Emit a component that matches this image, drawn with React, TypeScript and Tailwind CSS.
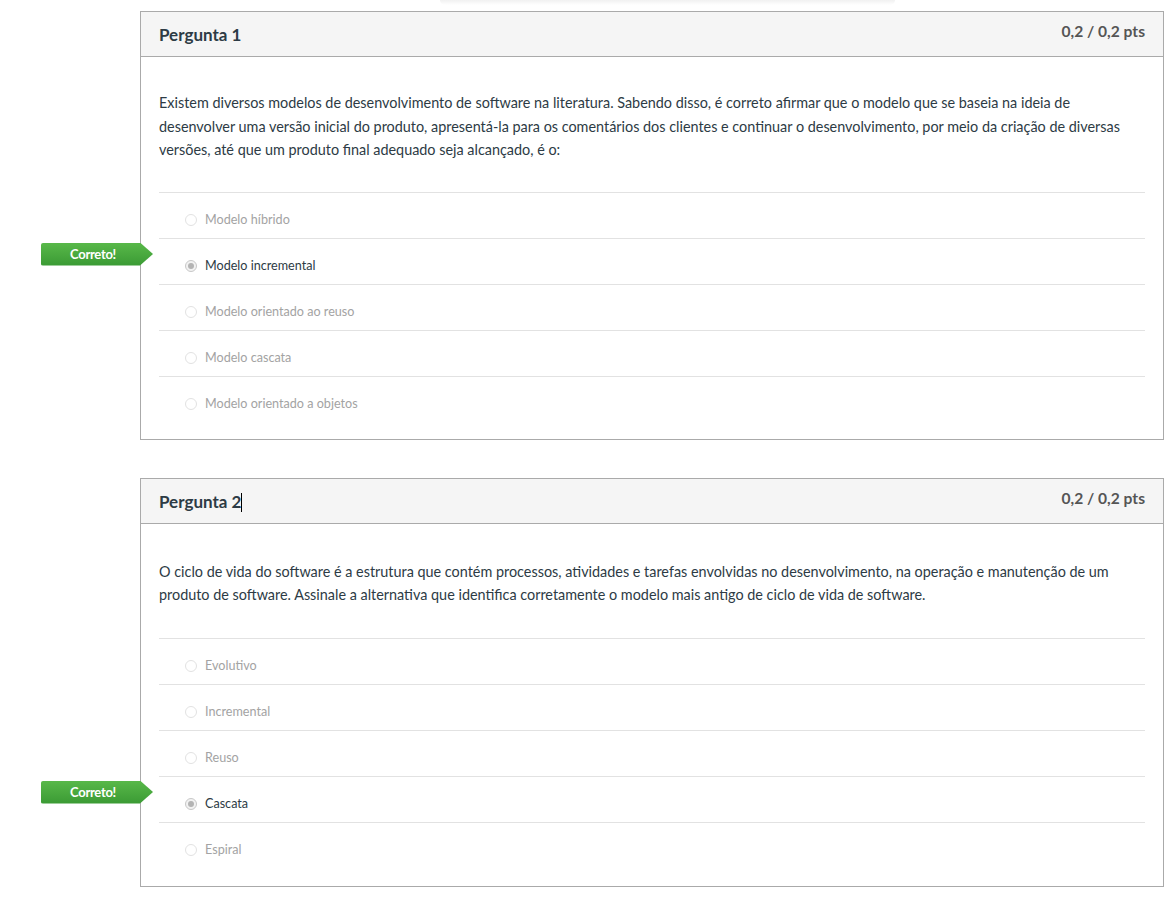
const questions = [
  {
    title: "Pergunta 1",
    text: "Existem diversos modelos de desenvolvimento de software na literatura. Sabendo disso, é correto afirmar que o modelo que se baseia na ideia de desenvolver uma versão inicial do produto, apresentá-la para os comentários dos clientes e continuar o desenvolvimento, por meio da criação de diversas versões, até que um produto final adequado seja alcançado, é o:",
    answers: [
      "Modelo híbrido",
      "Modelo incremental",
      "Modelo orientado ao reuso",
      "Modelo cascata",
      "Modelo orientado a objetos",
    ],
    correct: 1,
    cursor: false,
  },
  {
    title: "Pergunta 2",
    text: "O ciclo de vida do software é a estrutura que contém processos, atividades e tarefas envolvidas no desenvolvimento, na operação e manutenção de um produto de software. Assinale a alternativa que identifica corretamente o modelo mais antigo de ciclo de vida de software.",
    answers: ["Evolutivo", "Incremental", "Reuso", "Cascata", "Espiral"],
    correct: 3,
    cursor: true,
  },
];

function Radio({ checked }: { checked: boolean }) {
  return (
    <span
      className={`inline-flex items-center justify-center w-[12px] h-[12px] rounded-full border ${
        checked ? "border-[#c8c8c8] bg-[#f2f2f2]" : "border-[#e2e2e2] bg-white"
      }`}
    >
      {checked && <span className="w-[6px] h-[6px] rounded-full bg-[#b4b4b4]" />}
    </span>
  );
}

function CorrectBadge() {
  return (
    <div className="absolute left-[-118px] top-[4px] w-[112px] h-[23px] bg-gradient-to-b from-[#58b849] to-[#3a9a34] rounded-l-[2px] [clip-path:polygon(0_0,99px_0,112px_50%,99px_100%,0_100%)] flex items-center pr-[8px] justify-center">
      <span className="text-white font-bold text-[13px] leading-none tracking-[-0.3px]">Correto!</span>
    </div>
  );
}

function QuestionCard({ q }: { q: (typeof questions)[number] }) {
  return (
    <div className="w-[1024px] border border-[#aaaaaa] bg-white">
      {/* Header */}
      <div className="h-[45px] bg-[#f5f5f5] border-b border-[#aaaaaa] flex justify-between px-[18px]">
        <h2 className="text-[17px] font-bold text-[#2d3b45] pt-[12px] leading-[22px] flex items-center self-start">
          {q.title}
          {q.cursor && <span className="inline-block w-px h-[19px] bg-black mt-[2px]" />}
        </h2>
        <div className="text-[15.6px] font-bold text-[#555555] pt-[8px] leading-[22px]">0,2 / 0,2 pts</div>
      </div>

      {/* Body */}
      <div className={`px-[18px] ${q.cursor ? "pb-[18px]" : "pb-[17px]"}`}>
        <p
          className={`text-[14.4px] leading-[23.5px] text-[#2d3b45] ${
            q.cursor ? "pt-[36px] pb-[31px]" : "pt-[34px] pb-[30px]"
          }`}
        >
          {q.text}
        </p>
        <div>
          {q.answers.map((a, i) => {
            const selected = i === q.correct;
            return (
              <div
                key={a}
                className="relative border-t border-[#e2e2e2] pt-[17px] pb-[8px] flex items-center h-[46px] box-border"
              >
                {selected && <CorrectBadge />}
                <div className="flex items-center h-[20px] pl-[26px] gap-[8px]">
                  <Radio checked={selected} />
                  <span className={`text-[12.6px] leading-[20px] ${selected ? "text-[#2d3b45]" : "text-[#a3a3a3]"}`}>{a}</span>
                </div>
              </div>
            );
          })}
        </div>
      </div>
    </div>
  );
}

export default function App() {
  return (
    <main className="min-h-screen bg-white font-['Lato',sans-serif] pl-[140px]">
      {/* faint shadow of the element above */}
      <div className="h-[11px] flex">
        <div className="ml-[300px] w-[455px] h-[5px] bg-gradient-to-b from-[#f1f1f1] to-white rounded-b-full" />
      </div>
      <div className="flex flex-col gap-[38px]">
        {questions.map((q) => (
          <QuestionCard key={q.title} q={q} />
        ))}
      </div>
    </main>
  );
}
